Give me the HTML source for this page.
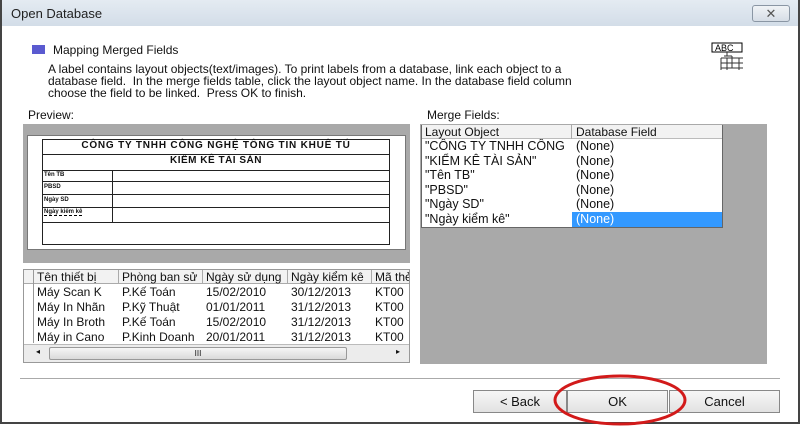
<!DOCTYPE html>
<html><head><meta charset="utf-8"><style>
*{margin:0;padding:0;box-sizing:border-box}
body{width:800px;height:424px;background:#fff;font-family:"Liberation Sans",sans-serif;font-size:12px;color:#111;position:relative;overflow:hidden}
.a{position:absolute;white-space:nowrap}
.cell{position:absolute;white-space:nowrap;overflow:hidden;line-height:14px}
</style></head><body>
<div class="a" style="left:0;top:0;width:800px;height:424px;border:2px solid #444;border-top:none"></div>
<div class="a" style="left:2px;top:0;width:796px;height:26px;background:linear-gradient(#e4ebf2,#d3dde8)"></div>
<div class="a" style="left:11px;top:6px;font-size:13px;color:#222">Open Database</div>
<div class="a" style="left:752px;top:5px;width:38px;height:17px;border:1px solid #8a96a4;border-radius:3px;background:linear-gradient(#f0f3f6,#d6dde6);text-align:center;font-size:13px;line-height:15px;color:#555">✕</div>
<div class="a" style="left:32px;top:45px;width:13px;height:9px;background:#5a5ad0"></div>
<div class="a" style="left:53px;top:43px;font-size:12px">Mapping Merged Fields</div>
<div class="a" style="left:48px;top:63px;font-size:12px;line-height:12px">A label contains layout objects(text/images). To print labels from a database, link each object to a<br>database field.&nbsp; In the merge fields table, click the layout object name. In the database field column<br>choose the field to be linked.&nbsp; Press OK to finish.</div>
<svg class="a" style="left:710px;top:40px" width="42" height="32"><rect x="2" y="3" width="30" height="9" fill="none" stroke="#000" stroke-width="1"/><text x="5" y="11" font-size="9" font-family="Liberation Sans">ABC</text><path d="M17 12v4M14 16h8M11 18h22M11 18v12M17 18v12M22 16v12M29 18v12M11 23h22M11 28h22" stroke="#333" fill="none" stroke-width="1"/></svg>
<div class="a" style="left:28px;top:108px">Preview:</div>
<div class="a" style="left:427px;top:108px">Merge Fields:</div>
<!-- preview -->
<div class="a" style="left:23px;top:124px;width:387px;height:139px;background:#a9a9a9"></div>
<div class="a" style="left:27px;top:135px;width:379px;height:115px;background:#fff;border:1px solid #777"></div>
<div class="a" style="left:42px;top:139px;width:348px;height:106px;border:1px solid #222"></div>
<div class="a" style="left:42px;top:154px;width:348px;border-top:1px solid #222"></div>
<div class="a" style="left:42px;top:170px;width:348px;border-top:1px solid #222"></div>
<div class="a" style="left:42px;top:181px;width:348px;border-top:1px solid #222"></div>
<div class="a" style="left:42px;top:194px;width:348px;border-top:1px solid #222"></div>
<div class="a" style="left:42px;top:207px;width:348px;border-top:1px solid #222"></div>
<div class="a" style="left:42px;top:222px;width:348px;border-top:1px solid #222"></div>
<div class="a" style="left:112px;top:170px;height:52px;border-left:1px solid #222"></div>
<div class="a" style="left:42px;top:140px;width:348px;text-align:center;font-size:10px;font-weight:bold;letter-spacing:0.8px">CÔNG TY TNHH CÔNG NGHỆ TÔNG TIN KHUÊ TÚ</div>
<div class="a" style="left:42px;top:155px;width:348px;text-align:center;font-size:10px;font-weight:bold;letter-spacing:0.5px">KIỂM KÊ TÀI SẢN</div>
<div class="a" style="left:44px;top:172px;font-size:6px;font-weight:bold">Tên TB</div>
<div class="a" style="left:44px;top:184px;font-size:6px;font-weight:bold">PBSD</div>
<div class="a" style="left:44px;top:197px;font-size:6px;font-weight:bold">Ngày SD</div>
<div class="a" style="left:44px;top:209px;font-size:6px;font-weight:bold;border-bottom:1px dashed #000">Ngày kiểm kê</div>
<!-- grid -->
<div class="a" style="left:23px;top:269px;width:387px;height:94px;border:1px solid #999;background:#fff"></div>
<div class="a" style="left:24px;top:270px;width:385px;height:14px;background:#f2f2f2;border-bottom:1px solid #aaa"></div>
<div class="a" style="left:33px;top:270px;height:73px;border-left:1px solid #999"></div>
<div class="a" style="left:118px;top:270px;height:14px;border-left:1px solid #aaa"></div>
<div class="a" style="left:202px;top:270px;height:14px;border-left:1px solid #aaa"></div>
<div class="a" style="left:287px;top:270px;height:14px;border-left:1px solid #aaa"></div>
<div class="a" style="left:371px;top:270px;height:14px;border-left:1px solid #aaa"></div>
<div class="cell" style="left:37px;top:270px">Tên thiết bị</div>
<div class="cell" style="left:122px;top:270px;width:78px">Phòng ban sử</div>
<div class="cell" style="left:206px;top:270px;width:79px">Ngày sử dụng</div>
<div class="cell" style="left:291px;top:270px;width:79px">Ngày kiểm kê</div>
<div class="cell" style="left:375px;top:270px;width:34px">Mã thẻ</div>
<div class="cell" style="left:37px;top:285px;width:80px;line-height:15px">Máy Scan K<br>Máy In Nhãn<br>Máy In Broth<br>Máy in Cano</div>
<div class="cell" style="left:122px;top:285px;width:78px;line-height:15px">P.Kế Toán<br>P.Kỹ Thuật<br>P.Kế Toán<br>P.Kinh Doanh</div>
<div class="cell" style="left:206px;top:285px;line-height:15px">15/02/2010<br>01/01/2011<br>15/02/2010<br>20/01/2011</div>
<div class="cell" style="left:291px;top:285px;line-height:15px">30/12/2013<br>31/12/2013<br>31/12/2013<br>31/12/2013</div>
<div class="cell" style="left:375px;top:285px;width:34px;line-height:15px">KT00<br>KT00<br>KT00<br>KT00</div>
<div class="a" style="left:24px;top:344px;width:385px;height:18px;background:#ececec;border-top:1px solid #bbb"></div>
<div class="a" style="left:49px;top:347px;width:298px;height:13px;background:linear-gradient(#f6f6f6,#dadada);border:1px solid #999;border-radius:2px;text-align:center;font-size:8px;line-height:11px">III</div>
<div class="a" style="left:36px;top:347px;font-size:8px">◂</div>
<div class="a" style="left:396px;top:347px;font-size:8px">▸</div>
<!-- merge fields -->
<div class="a" style="left:420px;top:124px;width:347px;height:240px;background:#a9a9a9"></div>
<div class="a" style="left:421px;top:125px;width:302px;height:103px;background:#fff;border:1px solid #666"></div>
<div class="a" style="left:422px;top:125px;width:300px;height:14px;background:#f2f2f2;border-bottom:1px solid #bbb"></div>
<div class="a" style="left:571px;top:125px;height:14px;border-left:1px solid #aaa"></div>
<div class="a" style="left:572px;top:212px;width:150px;height:15px;background:#3399ff"></div>
<div class="cell" style="left:425px;top:125px">Layout Object</div>
<div class="cell" style="left:576px;top:125px">Database Field</div>
<div class="cell" style="left:425px;top:139px;width:146px;font-size:12.5px;line-height:14.6px">"CÔNG TY TNHH CÔNG<br>"KIỂM KÊ TÀI SẢN"<br>"Tên TB"<br>"PBSD"<br>"Ngày SD"<br>"Ngày kiểm kê"</div>
<div class="cell" style="left:576px;top:139px;font-size:12.5px;line-height:14.6px">(None)<br>(None)<br>(None)<br>(None)<br>(None)<br><span style="color:#fff">(None)</span></div>
<!-- footer -->
<div class="a" style="left:20px;top:378px;width:760px;border-top:1px solid #aaa"></div>
<div class="a" style="left:473px;top:390px;width:94px;height:23px;border:1px solid #888;background:linear-gradient(#f6f6f6,#e2e2e2);text-align:center;line-height:21px;font-size:13px">&lt; Back</div>
<div class="a" style="left:567px;top:390px;width:101px;height:23px;border:1px solid #888;background:linear-gradient(#f6f6f6,#e2e2e2);text-align:center;line-height:21px;font-size:13px">OK</div>
<div class="a" style="left:669px;top:390px;width:111px;height:23px;border:1px solid #888;background:linear-gradient(#f6f6f6,#e2e2e2);text-align:center;line-height:21px;font-size:13px">Cancel</div>
<svg class="a" style="left:550px;top:372px" width="140" height="54"><ellipse cx="70" cy="28" rx="65" ry="24" fill="none" stroke="#d21a1a" stroke-width="3"/></svg>
</body></html>
